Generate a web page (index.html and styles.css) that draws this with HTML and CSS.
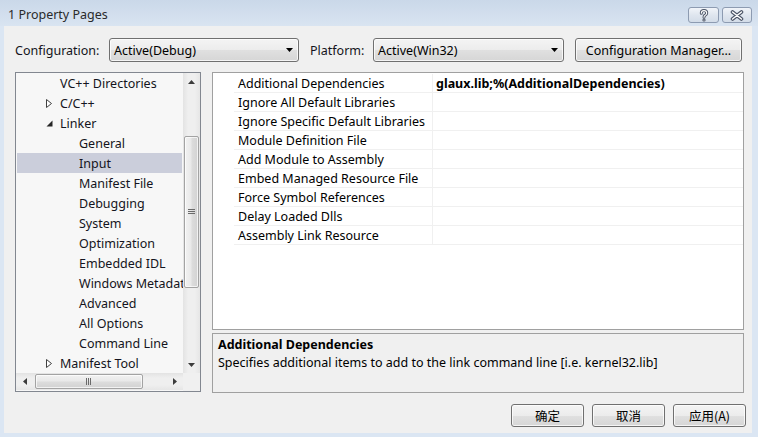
FILE: index.html
```html
<!DOCTYPE html>
<html>
<head>
<meta charset="utf-8">
<link rel="stylesheet" href="styles.css">
</head>
<body>
<div class="window">
  <div class="titlebar">
    <span class="title">1 Property Pages</span>
    <div class="caption-btns">
      <div class="cap-btn cap-help">
        <svg width="12" height="13" viewBox="0 0 12 13"><path d="M3.3 4.2 Q3.3 1.6 6 1.6 Q8.7 1.6 8.7 4 Q8.7 5.5 7.2 6.2 Q6 6.8 6 8.3" fill="none" stroke="#4b5466" stroke-width="3" stroke-linecap="round"/><circle cx="6" cy="11" r="1.6" fill="#4b5466"/><path d="M3.3 4.2 Q3.3 1.6 6 1.6 Q8.7 1.6 8.7 4 Q8.7 5.5 7.2 6.2 Q6 6.8 6 8.3" fill="none" stroke="#fff" stroke-width="1.1" stroke-linecap="round"/><circle cx="6" cy="11" r="0.6" fill="#fff"/></svg>
      </div>
      <div class="cap-btn cap-close">
        <svg width="14" height="11" viewBox="0 0 14 11"><path d="M2.5 2 L11.5 9 M11.5 2 L2.5 9" fill="none" stroke="#4b5466" stroke-width="3.6" stroke-linecap="round"/><path d="M2.5 2 L11.5 9 M11.5 2 L2.5 9" fill="none" stroke="#fff" stroke-width="1.4" stroke-linecap="round"/></svg>
      </div>
    </div>
  </div>
  <div class="client">
    <div class="config-row">
      <span class="lbl lbl-config">Configuration:</span>
      <div class="combo combo-config"><span class="combo-text">Active(Debug)</span><svg class="combo-arrow" width="7" height="4" viewBox="0 0 7 4"><path d="M0 0 H7 L3.5 4 Z" fill="#000"/></svg></div>
      <span class="lbl lbl-platform">Platform:</span>
      <div class="combo combo-platform"><span class="combo-text">Active(Win32)</span><svg class="combo-arrow" width="7" height="4" viewBox="0 0 7 4"><path d="M0 0 H7 L3.5 4 Z" fill="#000"/></svg></div>
      <div class="btn btn-cm">Configuration Manager...</div>
    </div>
    <div class="main">
      <div class="tree">
        <div class="tree-body">
          <div class="tree-view">
            <div class="item l1"><span class="toggle"></span><span>VC++ Directories</span></div>
            <div class="item l1"><span class="toggle"><svg width="6" height="9" viewBox="0 0 6 9"><path d="M0.5 0.5 L5.5 4.5 L0.5 8.5 Z" fill="#fff" stroke="#404040" stroke-width="1"/></svg></span><span>C/C++</span></div>
            <div class="item l1"><span class="toggle"><svg width="7" height="7" viewBox="0 0 7 7"><path d="M6.5 0.5 L6.5 6.5 L0.5 6.5 Z" fill="#262626"/></svg></span><span>Linker</span></div>
            <div class="item l2"><span>General</span></div>
            <div class="item l2 selected"><span>Input</span></div>
            <div class="item l2"><span>Manifest File</span></div>
            <div class="item l2"><span>Debugging</span></div>
            <div class="item l2"><span>System</span></div>
            <div class="item l2"><span>Optimization</span></div>
            <div class="item l2"><span>Embedded IDL</span></div>
            <div class="item l2"><span>Windows Metadata</span></div>
            <div class="item l2"><span>Advanced</span></div>
            <div class="item l2"><span>All Options</span></div>
            <div class="item l2"><span>Command Line</span></div>
            <div class="item l1"><span class="toggle"><svg width="6" height="9" viewBox="0 0 6 9"><path d="M0.5 0.5 L5.5 4.5 L0.5 8.5 Z" fill="#fff" stroke="#404040" stroke-width="1"/></svg></span><span>Manifest Tool</span></div>
          </div>
          <div class="vscroll">
            <div class="sb-btn"><svg width="7" height="4" viewBox="0 0 7 4"><path d="M0 4 H7 L3.5 0 Z" fill="#3c3c3c"/></svg></div>
            <div class="vthumb">
              <svg width="7" height="6" viewBox="0 0 7 6"><path d="M0 0.5 H7 M0 2.5 H7 M0 4.5 H7" stroke="#6a6a6a" stroke-width="1"/></svg>
            </div>
            <div class="sb-fill"></div>
            <div class="sb-btn"><svg width="7" height="4" viewBox="0 0 7 4"><path d="M0 0 H7 L3.5 4 Z" fill="#3c3c3c"/></svg></div>
          </div>
        </div>
        <div class="hscroll-row">
          <div class="hscroll">
            <div class="sb-btn h"><svg width="4" height="7" viewBox="0 0 4 7"><path d="M4 0 V7 L0 3.5 Z" fill="#3c3c3c"/></svg></div>
            <div class="hthumb">
              <svg width="6" height="7" viewBox="0 0 6 7"><path d="M0.5 0 V7 M2.5 0 V7 M4.5 0 V7" stroke="#6a6a6a" stroke-width="1"/></svg>
            </div>
            <div class="sb-fill"></div>
            <div class="sb-btn h"><svg width="4" height="7" viewBox="0 0 4 7"><path d="M0 0 V7 L4 3.5 Z" fill="#3c3c3c"/></svg></div>
          </div>
          <div class="corner"></div>
        </div>
      </div>
      <div class="right">
        <div class="grid">
          <div class="row"><div class="gutter"></div><div class="name">Additional Dependencies</div><div class="value bold">glaux.lib;%(AdditionalDependencies)</div></div>
          <div class="row"><div class="gutter"></div><div class="name">Ignore All Default Libraries</div><div class="value"></div></div>
          <div class="row"><div class="gutter"></div><div class="name">Ignore Specific Default Libraries</div><div class="value"></div></div>
          <div class="row"><div class="gutter"></div><div class="name">Module Definition File</div><div class="value"></div></div>
          <div class="row"><div class="gutter"></div><div class="name">Add Module to Assembly</div><div class="value"></div></div>
          <div class="row"><div class="gutter"></div><div class="name">Embed Managed Resource File</div><div class="value"></div></div>
          <div class="row"><div class="gutter"></div><div class="name">Force Symbol References</div><div class="value"></div></div>
          <div class="row"><div class="gutter"></div><div class="name">Delay Loaded Dlls</div><div class="value"></div></div>
          <div class="row"><div class="gutter"></div><div class="name">Assembly Link Resource</div><div class="value"></div></div>
        </div>
        <div class="desc">
          <div class="desc-title">Additional Dependencies</div>
          <div class="desc-text">Specifies additional items to add to the link command line [i.e. kernel32.lib]</div>
        </div>
      </div>
    </div>
    <div class="buttons">
      <div class="btn btn-dlg">确定</div>
      <div class="btn btn-dlg">取消</div>
      <div class="btn btn-dlg">应用(A)</div>
    </div>
  </div>
</div>
</body>
</html>
```

FILE: styles.css
```css
* { box-sizing: border-box; }
html, body { margin: 0; padding: 0; }
body {
  font-family: "Noto Sans", "Noto Sans CJK SC", sans-serif;
  font-size: 12.5px;
  color: #141420;
  background: #dbe6f3;
}
.window {
  width: 758px;
  height: 437px;
  background: #dbe6f3;
  display: flex;
  flex-direction: column;
  overflow: hidden;
}
.titlebar {
  height: 26px;
  flex: none;
  display: flex;
  align-items: flex-start;
  justify-content: space-between;
  background: linear-gradient(#cad8e9, #d9e4f1);
  padding: 0 6px 0 8px;
}
.title {
  margin-top: 6px;
  line-height: 18px;
  color: #2a2a2a;
}
.caption-btns {
  display: flex;
  gap: 3px;
  margin-top: 7px;
}
.cap-btn {
  width: 31px;
  height: 16px;
  border: 1px solid #8d9bb1;
  border-radius: 3px;
  background: linear-gradient(#f1f4f9, #dfe6ef 50%, #d3dce8);
  display: flex;
  align-items: center;
  justify-content: center;
}
.cap-close { width: 30px; }
.client {
  flex: 1;
  margin: 0 6px 4px 4px;
  background: #f0f0f0;
  display: flex;
  flex-direction: column;
}
.config-row {
  margin-top: 12px;
  height: 24px;
  padding-left: 11px;
  display: flex;
  align-items: center;
}
.lbl { line-height: 18px; padding-top: 1px; }
.lbl-config { width: 94px; }
.lbl-platform { width: 63px; margin-left: 11px; }
.combo, .btn {
  height: 24px;
  border: 1px solid #707070;
  border-radius: 3px;
  background: linear-gradient(#f4f4f4, #ececec 50%, #e0e0e0 51%, #d6d6d6);
  box-shadow: inset 0 0 0 1px rgba(255,255,255,0.75);
}
.combo {
  display: flex;
  align-items: center;
  justify-content: space-between;
  padding: 0 5px 0 4px;
}
.combo-config { width: 190px; }
.combo-platform { width: 191px; }
.combo-text { line-height: 18px; color: #000; padding-top: 1px; }
.btn {
  display: flex;
  align-items: center;
  justify-content: center;
  color: #000;
}
.btn-cm { width: 167px; margin-left: 11px; padding-top: 1px; }
.main {
  margin-top: 10px;
  padding-left: 11px;
  padding-right: 8px;
  display: flex;
  gap: 11px;
  height: 321px;
}
.tree {
  width: 186px;
  height: 320px;
  border: 1px solid #828790;
  background: #f7f7f7;
  display: flex;
  flex-direction: column;
}
.tree-body {
  display: flex;
  height: 300px;
}
.tree-view {
  width: 167px;
  overflow: hidden;
  white-space: nowrap;
}
.item {
  height: 20px;
  margin: 0 1px;
  display: flex;
  align-items: center;
  line-height: 18px;
  padding-top: 1px;
}
.item.l1 { padding-left: 26px; }
.item.l2 { padding-left: 62px; }
.toggle {
  width: 12px;
  margin-right: 5px;
  display: flex;
  align-items: center;
  justify-content: center;
}
.item.selected { background: #cbcedb; }
.vscroll {
  width: 17px;
  display: flex;
  flex-direction: column;
  background: linear-gradient(90deg, #e3e3e3, #efefef 30%, #efefef 70%, #e6e6e6);
}
.sb-btn {
  height: 17px;
  flex: none;
  display: flex;
  align-items: center;
  justify-content: center;
}
.sb-btn.h { width: 17px; height: 17px; }
.sb-fill { flex: 1; }
.vthumb {
  margin: 46px 1px 0 1px;
  height: 152px;
  border: 1px solid #a3a3a3;
  border-radius: 2px;
  background: linear-gradient(90deg, #f2f2f2, #e9e9e9 45%, #dcdcdc 55%, #d2d2d2);
  box-shadow: inset 0 0 0 1px rgba(255,255,255,0.7);
  display: flex;
  align-items: center;
  justify-content: center;
}
.hscroll-row {
  display: flex;
  height: 18px;
}
.hscroll {
  width: 167px;
  height: 17px;
  display: flex;
  background: linear-gradient(#e3e3e3, #efefef 30%, #efefef 70%, #e6e6e6);
}
.hthumb {
  margin: 1px 0 1px 2px;
  width: 108px;
  border: 1px solid #a3a3a3;
  border-radius: 2px;
  background: linear-gradient(#f2f2f2, #e9e9e9 45%, #dcdcdc 55%, #d2d2d2);
  box-shadow: inset 0 0 0 1px rgba(255,255,255,0.7);
  display: flex;
  align-items: center;
  justify-content: center;
}
.corner {
  width: 17px;
  background: #f0f0f0;
}
.right {
  flex: 1;
  display: flex;
  flex-direction: column;
  gap: 3px;
}
.grid {
  height: 258px;
  border: 1px solid #a0a0a0;
  background: #fff;
  padding-top: 1px;
}
.row {
  display: flex;
  height: 19px;
}
.gutter { width: 21px; }
.name {
  width: 199px;
  padding-left: 4px;
  padding-top: 1px;
  border-bottom: 1px solid #f0f0f0;
  border-right: 1px solid #f0f0f0;
  line-height: 17px;
  color: #000;
  white-space: nowrap;
  overflow: hidden;
}
.value {
  flex: 1;
  padding-left: 3px;
  padding-top: 1px;
  border-bottom: 1px solid #f0f0f0;
  line-height: 17px;
  color: #000;
  white-space: nowrap;
}
.bold { font-weight: bold; }
.desc {
  height: 60px;
  border: 1px solid #a0a0a0;
  background: #f0f0f0;
  padding: 2px 5px;
  color: #000;
}
.desc-title { font-weight: bold; line-height: 18px; }
.desc-text { line-height: 18px; }
.buttons {
  margin-top: 11px;
  padding-right: 6px;
  display: flex;
  justify-content: flex-end;
  gap: 8px;
}
.btn-dlg {
  width: 73px;
  height: 23px;
  font-family: "Noto Sans CJK SC", "Noto Sans", sans-serif;
}
```
